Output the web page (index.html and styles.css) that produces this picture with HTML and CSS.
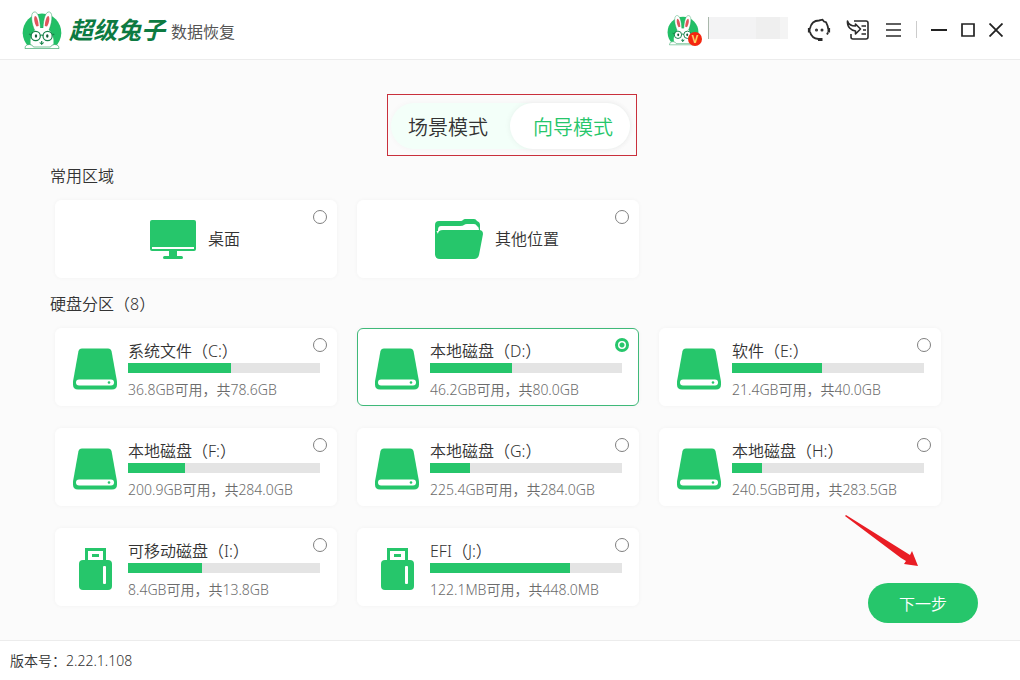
FILE: index.html
```html
<!DOCTYPE html>
<html lang="zh-CN">
<head>
<meta charset="utf-8">
<title>超级兔子数据恢复</title>
<link rel="stylesheet" href="styles.css">
</head>
<body>
<svg class="defs" aria-hidden="true">
  <symbol id="rabbit" viewBox="0 0 40 40">
    <path d="M7 37A19.300 19.300 0 1 1 33 37z" fill="#22bf66"/>
    <path d="M13 21C9.500 14 8 3 12 2c4-1 6 7 6.500 16h2.500c.5-9 2.500-17 6.500-16 4 1 2.500 12-1 19z" fill="#fff" stroke="#1f9b56" stroke-width=".5"/>
    <path d="M14.500 16.500c-2.500-4-3-9-1.500-10.500 2 0 3.500 5 3.700 10zM25 16.500c2.500-4 3-9 1.500-10.500-2 0-3.500 5-3.700 10z" fill="#e0555c"/>
    <path d="M9 38C7 27 10 18 20 18s13 9 11 20z" fill="#fff"/>
    <path d="M3 38.500q0-4 4.500-4 3 0 4 2.500h17q1-2.500 4-2.500 4.500 0 4.500 4z" fill="#fff" stroke="#1f9b56" stroke-width=".6"/>
    <g fill="none" stroke="#17834a" stroke-width="1.200">
      <circle cx="13.700" cy="26" r="4.600"/><circle cx="25.600" cy="26" r="4.600"/>
      <path d="M18.200 25.500q1.500-1 3 0M19.700 31v4M17.700 32.500q2 2.500 4 0M9 25l-2-1M30.300 25l2-1"/>
    </g>
    <ellipse cx="14" cy="26" rx="1.200" ry="1.700" fill="#145c38"/><ellipse cx="25.300" cy="26" rx="1.200" ry="1.700" fill="#145c38"/>
  </symbol>
  <symbol id="disk" viewBox="0 0 44 41">
    <path d="M9 0h26q3 0 3.600 3L44 33v3q0 5-5 5H5q-5 0-5-5v-3L5.400 3Q6 0 9 0z" fill="#26c66b"/>
    <rect x="3" y="31" width="38" height="6" rx="3" fill="#fff"/><circle cx="36" cy="34" r="1.300" fill="#26c66b"/>
  </symbol>
  <symbol id="usb" viewBox="0 0 44 42">
    <path d="M13.500 13V1.500h18V13" fill="none" stroke="#26c66b" stroke-width="3"/>
    <rect x="19" y="6" width="7" height="3" fill="#26c66b"/>
    <rect x="6" y="12" width="33" height="30" rx="4" fill="#26c66b"/>
    <rect x="30" y="18" width="3" height="18" rx="1" fill="#fff"/>
  </symbol>
</svg>

<header class="titlebar">
  <div class="brand">
    <svg class="brand-logo"><use href="#rabbit"/></svg>
    <span class="brand-name">超级兔子</span>
    <span class="brand-product">数据恢复</span>
  </div>
  <div class="tools">
    <div class="avatar">
      <svg class="avatar-pic"><use href="#rabbit"/></svg>
      <span class="vip">V</span>
    </div>
    <div class="username"></div>
    <button class="tool support" aria-label="客服"><svg width="24" height="24" viewBox="0 0 24 24" fill="none" stroke="#2b2b2b" stroke-width="1.800"><path d="M3 10.500C4 5.500 7.500 2.500 12 2.500l3.500-.8 1.500 1.800 2 .7c1 2 2 4 2.200 6.500M3 14c1 4 4 6.500 8.500 7"/><path d="M2.200 10v4.500M21.800 10v4.500" stroke-width="2.600"/><path d="M21 14.500l-1 2"/><path d="M11 21.500h4.500" stroke-width="3"/><circle cx="9.500" cy="12" r=".6"/><circle cx="15" cy="12" r=".6"/></svg></button>
    <button class="tool guide" aria-label="导入"><svg width="24" height="24" viewBox="0 0 24 24" fill="none" stroke="#2b2b2b" stroke-width="1.600" stroke-linejoin="round"><path d="M8 3h12q2 0 2 2v14q0 2-2 2H7q-2 0-2-2v-3"/><path d="M1.500 3c1 3.500 3 5 8 5V6l5 5-5 5v-3C5 12.500 1 9 1.500 3z"/><path d="M15.500 8H20M17 12h3M15.500 16H20"/></svg></button>
    <button class="tool menu" aria-label="菜单"><svg width="16" height="16" viewBox="0 0 16 16" stroke="#2b2b2b" stroke-width="1.700"><path d="M0 2h15M0 8h15M0 14h15"/></svg></button>
    <span class="divider"></span>
    <button class="tool minimize" aria-label="最小化"><svg width="16" height="16" viewBox="0 0 16 16" stroke="#222" stroke-width="2"><path d="M0 8h16"/></svg></button>
    <button class="tool maximize" aria-label="最大化"><svg width="14" height="14" viewBox="0 0 14 14" fill="none" stroke="#222" stroke-width="1.700"><path d="M1 1h12v12H1z"/></svg></button>
    <button class="tool close" aria-label="关闭"><svg width="14" height="14" viewBox="0 0 14 14" stroke="#222" stroke-width="1.800"><path d="M.5.5l13 13M13.500.5l-13 13"/></svg></button>
  </div>
</header>

<main class="content">
  <div class="mode-frame">
    <div class="modes">
      <button class="mode">场景模式</button>
      <button class="mode mode-active">向导模式</button>
    </div>
  </div>

  <h2 class="heading">常用区域</h2>
  <div class="cards">
    <label class="card place">
      <svg width="46" height="39" viewBox="0 0 46 39"><rect width="46" height="31" rx="2" fill="#26c66b"/><path d="M2 28h42" stroke="#fff" stroke-width="2"/><path d="M19 31h8v5h-8z" fill="#26c66b"/><rect x="13" y="36" width="20" height="3" rx="1.500" fill="#26c66b"/></svg>
      <span>桌面</span><input class="pick" type="radio" name="loc">
    </label>
    <label class="card place">
      <svg width="48" height="40" viewBox="0 0 48 40"><path d="M0 6q0-4 4-4h22q1 0 2-1t2-1h9q2 0 3 2 3 1 3 4v6H0z" fill="#26c66b"/><path d="M3 16v-5q0-4 3-4h19q3 0 4-1t3-1h7q2 0 3 2 2 1 2 4v5z" fill="#fff"/><path d="M0 9l3 6q0-4 5-4h36q4 0 4 4l-4 21q-1 4-5 4H5q-5 0-5-5z" fill="#26c66b"/></svg>
      <span>其他位置</span><input class="pick" type="radio" name="loc">
    </label>
  </div>

  <h2 class="heading">硬盘分区（8）</h2>
  <div class="cards">
    <label class="card drive"><svg class="drive-icon"><use href="#disk"/></svg><span class="info"><span class="name">系统文件（C:）</span><span class="bar"><span class="used" style="width:53.600%"></span></span><span class="size">36.8GB可用，共78.6GB</span></span><input class="pick" type="radio" name="loc"></label>
    <label class="card drive"><svg class="drive-icon"><use href="#disk"/></svg><span class="info"><span class="name">本地磁盘（D:）</span><span class="bar"><span class="used" style="width:42.700%"></span></span><span class="size">46.2GB可用，共80.0GB</span></span><input class="pick" type="radio" name="loc" checked></label>
    <label class="card drive"><svg class="drive-icon"><use href="#disk"/></svg><span class="info"><span class="name">软件（E:）</span><span class="bar"><span class="used" style="width:46.900%"></span></span><span class="size">21.4GB可用，共40.0GB</span></span><input class="pick" type="radio" name="loc"></label>
    <label class="card drive"><svg class="drive-icon"><use href="#disk"/></svg><span class="info"><span class="name">本地磁盘（F:）</span><span class="bar"><span class="used" style="width:29.700%"></span></span><span class="size">200.9GB可用，共284.0GB</span></span><input class="pick" type="radio" name="loc"></label>
    <label class="card drive"><svg class="drive-icon"><use href="#disk"/></svg><span class="info"><span class="name">本地磁盘（G:）</span><span class="bar"><span class="used" style="width:20.800%"></span></span><span class="size">225.4GB可用，共284.0GB</span></span><input class="pick" type="radio" name="loc"></label>
    <label class="card drive"><svg class="drive-icon"><use href="#disk"/></svg><span class="info"><span class="name">本地磁盘（H:）</span><span class="bar"><span class="used" style="width:15.600%"></span></span><span class="size">240.5GB可用，共283.5GB</span></span><input class="pick" type="radio" name="loc"></label>
    <label class="card drive"><svg class="drive-icon"><use href="#usb"/></svg><span class="info"><span class="name">可移动磁盘（I:）</span><span class="bar"><span class="used" style="width:38.500%"></span></span><span class="size">8.4GB可用，共13.8GB</span></span><input class="pick" type="radio" name="loc"></label>
    <label class="card drive"><svg class="drive-icon"><use href="#usb"/></svg><span class="info"><span class="name">EFI（J:）</span><span class="bar"><span class="used" style="width:72.900%"></span></span><span class="size">122.1MB可用，共448.0MB</span></span><input class="pick" type="radio" name="loc"></label>
  </div>

  <div class="actions">
    <svg class="arrow" width="74" height="54" viewBox="0 0 74 54"><path d="M0 1l1-1 64 40 2-4 6 15-14-2 2-3-5-3z" fill="#e91d24"/></svg>
    <button class="next">下一步</button>
  </div>
</main>

<footer class="statusbar">版本号：2.22.1.108</footer>
</body>
</html>
```

FILE: styles.css
```css
* { box-sizing: border-box; }
body {
  margin: 0;
  min-height: 100vh;
  display: flex;
  flex-direction: column;
  background: #fbfbfb;
  color: #333;
  font: 350 16px/24px "Noto Sans", "Noto Sans CJK SC", sans-serif;
}
button { border: 0; padding: 0; background: none; font: inherit; color: inherit; cursor: pointer; }
svg { display: block; flex: none; }
.defs { position: absolute; width: 0; height: 0; }

.titlebar {
  height: 60px;
  display: flex;
  align-items: center;
  justify-content: space-between;
  padding: 0 17px 0 22px;
  background: #fff;
  border-bottom: 1px solid #ececec;
}
.brand { display: flex; align-items: center; }
.brand-logo { width: 40px; height: 40px; margin-right: 7px; }
.brand-name {
  font-size: 24px;
  font-weight: 700;
  font-style: italic;
  color: #0d7a41;
}
.brand-product { margin-left: 6px; padding-top: 4px; font-weight: 400; color: #555; }
.tools { display: flex; align-items: center; }
.avatar { position: relative; }
.avatar-pic { width: 32px; height: 32px; }
.vip {
  position: absolute;
  right: -3px;
  bottom: 0;
  width: 14px;
  height: 14px;
  border-radius: 50%;
  background: #f4260f;
  color: #ffd56b;
  font-size: 10px;
  font-weight: 700;
  line-height: 14px;
  text-align: center;
}
.username {
  width: 80px;
  height: 22px;
  margin: 0 19px 4px 9px;
  border-left: 1px solid #a9b7ab;
  background: linear-gradient(90deg, #f3f3f4 60%, #efefef 60%, #efefef 90%, #f4f4f4 90%);
}
.guide { margin-left: 15px; }
.menu { margin-left: 16px; }
.divider { width: 1px; height: 17px; margin: 0 14px; background: #ccc; }
.maximize { margin-left: 14px; }
.close { margin-left: 14px; }

.content { flex: 1; padding: 34px 0 17px; display: flex; flex-direction: column; }
.mode-frame {
  align-self: center;
  margin-left: 4px;
  padding: 8px 6px 6px 3px;
  border: 1px solid #c9303c;
}
.modes {
  display: flex;
  border-radius: 23px;
  background: #f3fff9;
  box-shadow: 0 0 6px rgba(0, 0, 0, .03);
}
.mode { width: 119px; height: 46px; padding: 3px 5px 0 0; border-radius: 23px; font-size: 20px; }
.mode-active {
  width: 120px;
  padding: 3px 0 0 6px;
  background: #fff;
  color: #26c66b;
  box-shadow: 0 0 6px rgba(0, 0, 0, .06);
}
.heading { margin: 8px 0 12px 50px; font-size: 16px; font-weight: 350; }
.cards {
  display: grid;
  grid-template-columns: repeat(3, minmax(0, 1fr));
  gap: 22px 20px;
  padding: 0 79px 0 55px;
}
.cards + .heading { margin-top: 14px; }
.card {
  position: relative;
  height: 78px;
  display: flex;
  align-items: center;
  border: 1px solid #fff;
  border-radius: 6px;
  background: #fff;
  box-shadow: 0 0 4px rgba(0, 0, 0, .04);
  cursor: pointer;
}
.card:has(.pick:checked) { border-color: #3fb979; }
.place { justify-content: center; gap: 12px; padding-right: 2px; }
.drive { padding: 0 16px 0 17px; gap: 11px; }
.drive-icon { width: 44px; height: 42px; margin-top: 4px; }
.info { flex: 1; display: flex; flex-direction: column; padding-top: 6px; }
.name { line-height: 24px; }
.bar { height: 10px; background: #e4e4e4; }
.used { display: block; height: 100%; background: #26c66b; }
.size { margin-top: 6px; font-size: 14px; line-height: 22px; color: #6c6c6c; }
.pick {
  appearance: none;
  position: absolute;
  top: 9px;
  right: 9px;
  width: 14px;
  height: 14px;
  margin: 0;
  border: 1px solid #808080;
  border-radius: 50%;
  background: #fff;
}
.pick:checked {
  border-color: #26c66b;
  border-width: 3px;
  background: radial-gradient(circle, #26c66b 2px, #fff 3px);
}
.actions { position: relative; align-self: flex-end; margin: -23px 42px 0 0; }
.arrow { position: absolute; left: -23px; top: -68px; }
.next { display: block; width: 110px; height: 40px; padding-top: 2px; border-radius: 20px; background: #26c66b; color: #fff; }
.statusbar {
  height: 40px;
  padding: 0 10px;
  border-top: 1px solid #ececec;
  background: #fff;
  font-size: 14px;
  line-height: 40px;
}
```
